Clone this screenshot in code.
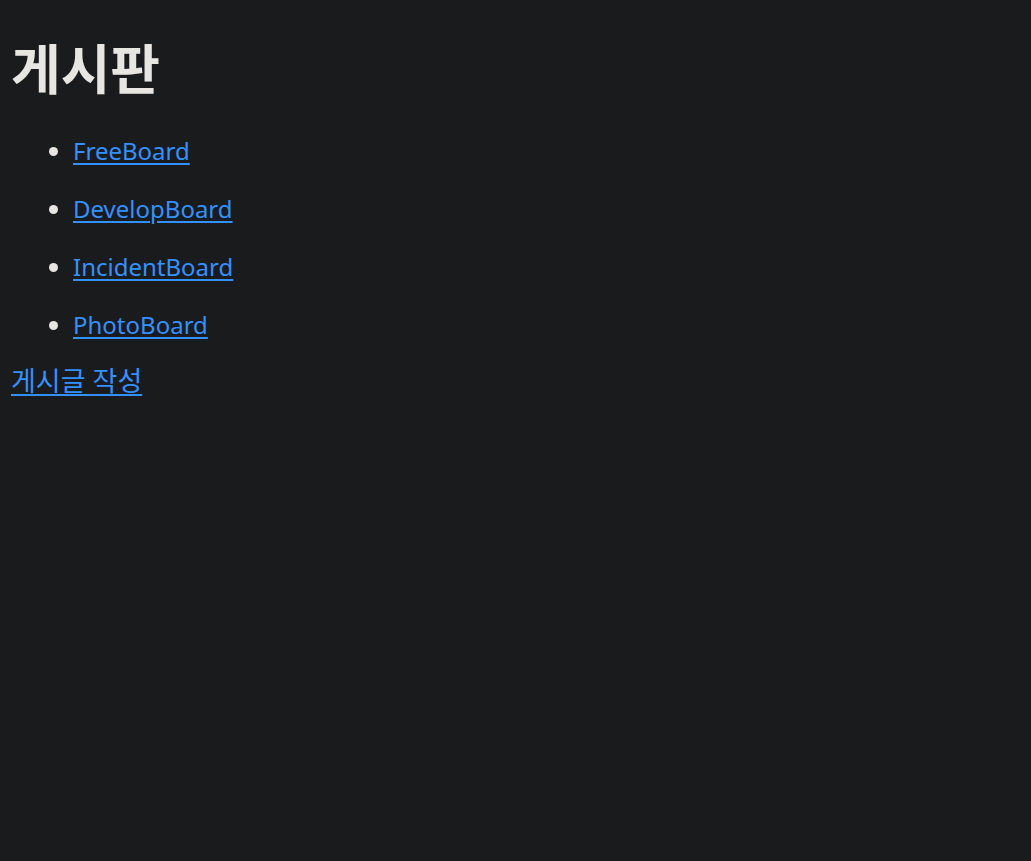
const boards = ["FreeBoard", "DevelopBoard", "IncidentBoard", "PhotoBoard"];

export default function App() {
  return (
    <div
      className="min-h-screen bg-[#1a1b1d] px-[11px] pt-[37px] text-[#e8e6e3]"
      style={{ fontFamily: '"Noto Sans", "Noto Sans CJK KR", sans-serif' }}
    >
      <h1 className="text-[54px] font-bold leading-[64px]">게시판</h1>
      <ul className="mt-[34px] list-disc pl-[62px] marker:text-[#e8e6e3]">
        {boards.map((b) => (
          <li key={b} className="h-[58px] last:h-[56px] text-[24px] leading-[32px]">
            <a href="#" className="text-[#3391ff] underline underline-offset-[3px]">
              {b}
            </a>
          </li>
        ))}
      </ul>
      <a
        href="#"
        className="text-[27px] leading-[32px] text-[#3391ff] underline underline-offset-[3px]"
      >
        게시글 작성
      </a>
    </div>
  );
}
